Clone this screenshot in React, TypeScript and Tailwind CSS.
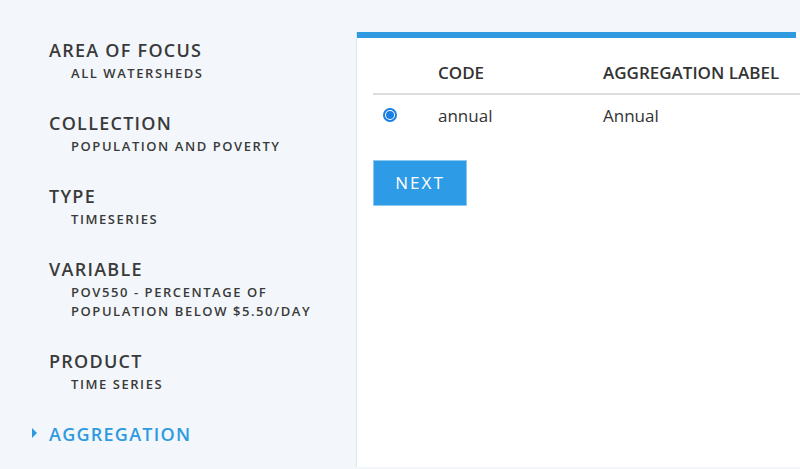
import { useState } from 'react';

const STEPS = [
  { title: 'AREA OF FOCUS', value: ['ALL WATERSHEDS'] },
  { title: 'COLLECTION', value: ['POPULATION AND POVERTY'] },
  { title: 'TYPE', value: ['TIMESERIES'] },
  { title: 'VARIABLE', value: ['POV550 - PERCENTAGE OF', 'POPULATION BELOW $5.50/DAY'] },
  { title: 'PRODUCT', value: ['TIME SERIES'] },
];

const ROWS = [{ code: 'annual', label: 'Annual' }];

export default function App() {
  const [selected, setSelected] = useState('annual');

  return (
    <div className="flex h-[469px] w-[800px] overflow-hidden bg-[#f3f7fb] font-['Open_Sans',sans-serif] text-[#333]">
      <aside className="w-[356px] shrink-0 pl-[49px] pt-[38px]">
        {STEPS.map((s) => (
          <div key={s.title} className="mb-[28px]">
            <div className="text-[18px] font-semibold leading-[24px] tracking-[0.07em] text-[#3a3a3a]">{s.title}</div>
            <div className="mt-[2px] pl-[22px] text-[13px] font-semibold leading-[19px] tracking-[0.12em] text-[#3a3a3a]">
              {s.value.map((v) => (
                <div key={v}>{v}</div>
              ))}
            </div>
          </div>
        ))}
        <div className="relative mt-[4px] text-[18px] font-semibold leading-[24px] tracking-[0.07em] text-[#2f9ae0]">
          <span className="absolute -left-[17px] top-[6px] h-0 w-0 border-y-[5px] border-l-[5px] border-y-transparent border-l-[#2f9ae0]" />
          AGGREGATION
        </div>
      </aside>

      <main className="mt-[32px] mb-[2px] flex-1 border-l border-[#dbe6f0] bg-white">
        <div className="mr-[4px] h-[6px] bg-[#2f9ae0]" />
        <div className="pl-[16px] pt-[22px]">
          <table className="w-full border-collapse text-left text-[17px]">
            <thead>
              <tr className="border-b-2 border-[#dddddd]">
                <th className="w-[65px] pb-[7px]" />
                <th className="w-[165px] pb-[7px] font-semibold">CODE</th>
                <th className="pb-[7px] font-semibold">AGGREGATION LABEL</th>
              </tr>
            </thead>
            <tbody>
              {ROWS.map((r) => (
                <tr key={r.code}>
                  <td className="py-[8px] pl-[10px]">
                    <button
                      type="button"
                      onClick={() => setSelected(r.code)}
                      className="flex h-[14px] w-[14px] items-center justify-center rounded-full border-2 border-[#1a7fe0]"
                    >
                      {selected === r.code ? <span className="h-[8px] w-[8px] rounded-full bg-[#1a7fe0]" /> : null}
                    </button>
                  </td>
                  <td className="py-[8px]">{r.code}</td>
                  <td className="py-[8px]">{r.label}</td>
                </tr>
              ))}
            </tbody>
          </table>
          <button
            type="button"
            className="mt-[24px] h-[46px] w-[94px] border border-[#8ccaf2] bg-[#2d9be5] text-[17px] tracking-[0.12em] text-white"
          >
            NEXT
          </button>
        </div>
      </main>
    </div>
  );
}
